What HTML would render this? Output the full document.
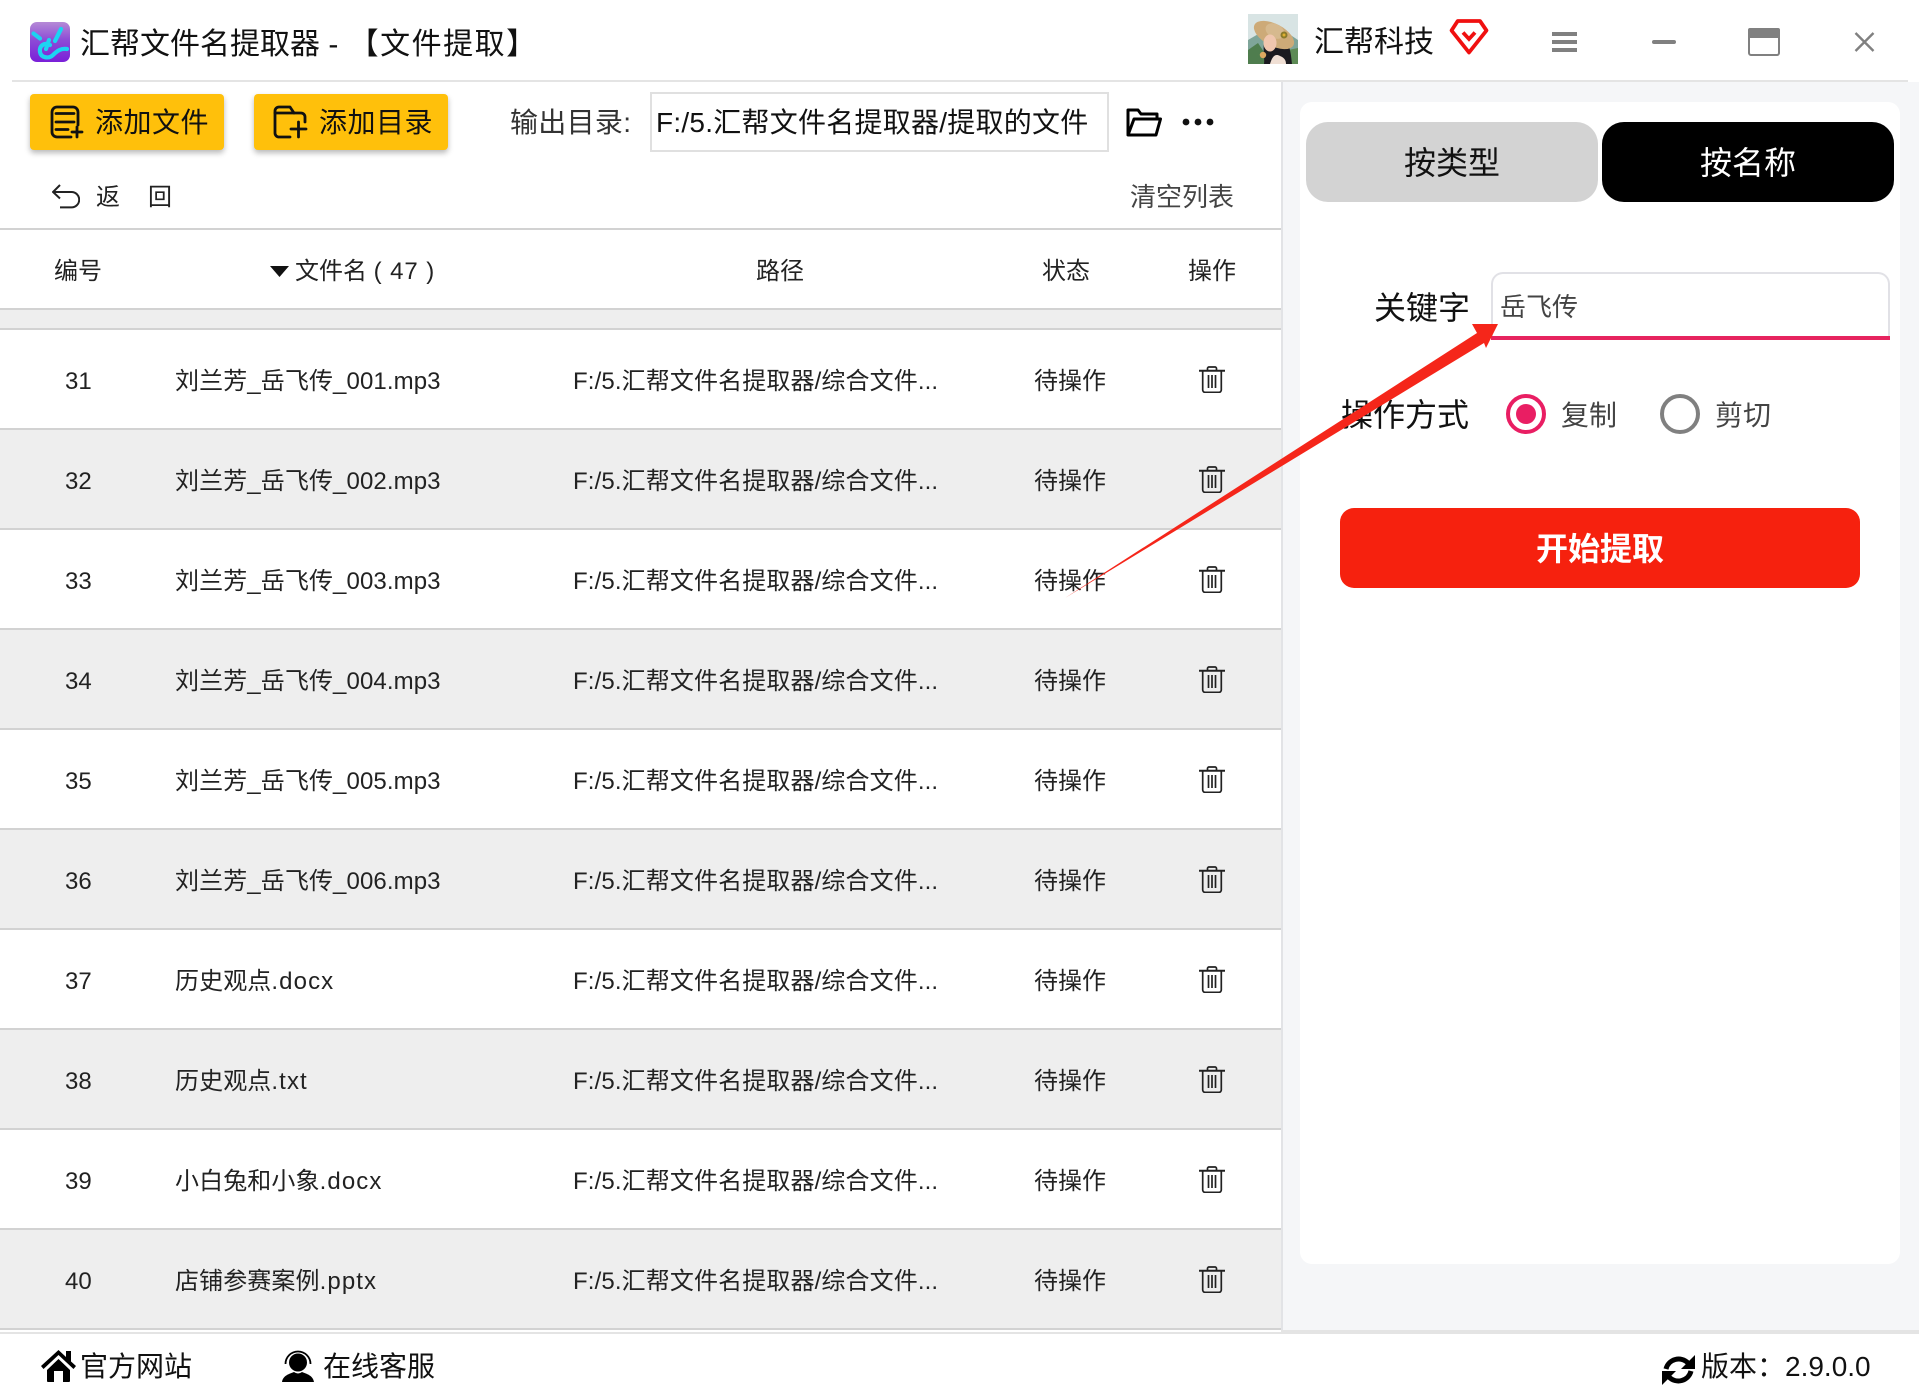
<!DOCTYPE html>
<html lang="zh-CN">
<head>
<meta charset="utf-8">
<title>汇帮文件名提取器</title>
<style>
html,body{margin:0;padding:0;background:#fff;}
body{position:relative;width:1919px;height:1399px;overflow:hidden;font-family:"Liberation Sans","Noto Sans CJK SC",sans-serif;color:#222;}
.a{position:absolute;}
.t{position:absolute;white-space:nowrap;line-height:40px;height:40px;}
.btn{position:absolute;top:94px;height:56px;width:194px;background:#ffc00b;border-radius:4px;box-shadow:0 3px 6px rgba(0,0,0,.28);}
.row{position:absolute;left:0;width:1281px;height:98px;font-size:24px;}
.row.g{background:#eeeeee;}
.row span{position:absolute;top:32px;line-height:40px;white-space:nowrap;}
.row .n{left:65px;}
.row .f{left:175px;letter-spacing:.1px;}
.row .f i{font-style:normal;letter-spacing:1.1px;}
.row .p{left:573px;letter-spacing:.12px;}
.row .s{left:1034px;}
.row svg{position:absolute;left:1199px;top:36px;}
.ln{position:absolute;left:0;width:1281px;height:2px;background:#d2d2d2;}
</style>
</head>
<body>
<svg width="0" height="0" style="position:absolute"><defs>
<symbol id="trash" viewBox="0 0 26 27"><g fill="none" stroke="#222" stroke-width="1.7"><path d="M8.5 4V2.5A1.5 1.5 0 0 1 10 1h6a1.5 1.5 0 0 1 1.5 1.5V4"/><path d="M0 4.7H26" stroke-width="2"/><path d="M3.7 5V24a2.3 2.3 0 0 0 2.3 2.3h14a2.3 2.3 0 0 0 2.3-2.3V5"/><path d="M9.5 9V22M13 9V22M16.5 9V22"/></g></symbol>
<linearGradient id="lg" x1="0" y1="0" x2="0" y2="1"><stop offset="0" stop-color="#b58ad6"/><stop offset=".45" stop-color="#8d4bd6"/><stop offset="1" stop-color="#7a1fd8"/></linearGradient>
</defs></svg>

<!-- title bar -->
<svg class="a" style="left:30px;top:22px" width="40" height="40" viewBox="0 0 40 40"><rect width="40" height="40" rx="7" fill="url(#lg)"/><g fill="none" stroke="#1cd3f2" stroke-width="4.2" stroke-linecap="round" stroke-linejoin="round"><path d="M3.5 11.5L10 16.5"/><path d="M31 7L25 19"/><path d="M20 23C14 20 9 24 10 30C11 36 19 37 23 33C27 29 31 26 37 27"/><path d="M19 18L16 27"/></g></svg>
<div class="t" style="left:80px;top:25px;font-size:30px;color:#111">汇帮文件名提取器 - <span style="letter-spacing:1.5px;margin-left:2px">【文件提取】</span></div>
<div class="a" style="left:12px;top:80px;width:1896px;height:2px;background:#e4e4e4"></div>

<svg class="a" style="left:1248px;top:14px" width="50" height="50" viewBox="0 0 50 50"><rect width="50" height="50" fill="#d8e4e4"/><path d="M0 26L12 19L24 26L38 18L50 26V50H0Z" fill="#7fa59a"/><path d="M0 36L10 29L24 50H0Z" fill="#4f7d4e"/><path d="M40 36L50 34V50H40Z" fill="#5d8a55"/><path d="M17 24C14 34 17 44 16 50H44C43 40 42 30 36 24Z" fill="#1b1a20"/><ellipse cx="26" cy="21" rx="22" ry="11" transform="rotate(28 26 21)" fill="#cdaa78"/><ellipse cx="27" cy="17" rx="10" ry="7" transform="rotate(28 27 17)" fill="#d6b98e"/><circle cx="36" cy="21" r="3.5" fill="#8a7a2a"/><circle cx="36" cy="21" r="1.5" fill="#e0b030"/><ellipse cx="22" cy="29" rx="6.5" ry="8.5" fill="#f0c6ae"/><path d="M22 50C24 43 27 39 32 42C37 44 38 47 38 50Z" fill="#f0dfd4"/><circle cx="15" cy="41" r="3.2" fill="#dca760"/></svg>
<div class="t" style="left:1314px;top:23px;font-size:30px;color:#111">汇帮科技</div>
<svg class="a" style="left:1445px;top:14px" width="48" height="48" viewBox="0 0 48 48"><path d="M12.7 7H35L41.5 16.5L24 38.5L6.5 16.5Z" fill="none" stroke="#f01010" stroke-width="3.8" stroke-linejoin="round"/><path d="M18 18.5L24 25L30 18.5" fill="none" stroke="#f01010" stroke-width="3.8"/></svg>
<svg class="a" style="left:1552px;top:32px" width="25" height="20"><path d="M0 2H25M0 10H25M0 18H25" stroke="#808080" stroke-width="4"/></svg>
<div class="a" style="left:1652px;top:40px;width:24px;height:4px;border-radius:2px;background:#808080"></div>
<svg class="a" style="left:1748px;top:28px" width="32" height="28"><rect x="1" y="1" width="30" height="26" rx="2" fill="none" stroke="#808080" stroke-width="2"/><rect x="0" y="0" width="32" height="10" rx="2" fill="#808080"/></svg>
<svg class="a" style="left:1854px;top:32px" width="21" height="20"><path d="M1.5 1L19.5 19M19.5 1L1.5 19" stroke="#808080" stroke-width="2.4"/></svg>

<!-- toolbar -->
<div class="btn" style="left:30px"></div>
<svg class="a" style="left:40px;top:100px" width="50" height="50" viewBox="0 0 50 50"><g fill="none" stroke="#111" stroke-width="2.8" stroke-linecap="round"><path d="M31 37H17a5 5 0 0 1-5-5V12a5 5 0 0 1 5-5h16a5 5 0 0 1 5 5V25"/><path d="M16 13.5H34M16 22H34M16 29.5H28"/><path d="M32 32H42M37 27V37"/></g></svg>
<div class="t" style="left:95px;top:103px;font-size:28px;letter-spacing:.5px;color:#111">添加文件</div>
<div class="btn" style="left:254px"></div>
<svg class="a" style="left:270px;top:100px" width="50" height="50" viewBox="0 0 50 50"><g fill="none" stroke="#111" stroke-width="2.8" stroke-linecap="round" stroke-linejoin="round"><path d="M20 37H9a4 4 0 0 1-4-4V11a4 4 0 0 1 4-4H20l4 6H31a4 4 0 0 1 4 4V22"/><path d="M5 13H24"/><path d="M21 29H36M28.5 22V37"/></g></svg>
<div class="t" style="left:319px;top:103px;font-size:28px;letter-spacing:.5px;color:#111">添加目录</div>
<div class="t" style="left:510px;top:103px;font-size:28px;letter-spacing:.3px;color:#333">输出目录:</div>
<div class="a" style="left:650px;top:92px;width:455px;height:56px;border:2px solid #e0e0e0"></div>
<div class="t" style="left:656px;top:103px;font-size:28px;letter-spacing:.25px;color:#111">F:/5.汇帮文件名提取器/提取的文件</div>
<svg class="a" style="left:1126px;top:107px" width="36" height="30" viewBox="0 0 36 30"><path d="M2 28V3H12L15 7H31V12M2 28H30L34.5 12H8L2 28Z" fill="none" stroke="#000" stroke-width="3" stroke-linejoin="round"/></svg>
<svg class="a" style="left:1182px;top:117px" width="32" height="10"><circle cx="4" cy="5" r="3.4" fill="#111"/><circle cx="16" cy="5" r="3.4" fill="#111"/><circle cx="28" cy="5" r="3.4" fill="#111"/></svg>

<svg class="a" style="left:52px;top:184px" width="28" height="25" viewBox="0 0 28 25"><path d="M8 1L1 8L8 14.5M1 8H19.5a7.7 7.7 0 0 1 0 15.4H8" fill="none" stroke="#222" stroke-width="2"/></svg>
<div class="t" style="left:96px;top:178px;font-size:24px">返</div>
<div class="t" style="left:148px;top:178px;font-size:24px">回</div>
<div class="t" style="left:1130px;top:177px;font-size:26px;color:#444">清空列表</div>

<div class="ln" style="top:228px"></div>
<div class="t" style="left:54px;top:252px;font-size:24px">编号</div>
<svg class="a" style="left:270px;top:266px" width="19" height="11"><path d="M0 0H19L9.5 11Z" fill="#111"/></svg>
<div class="t" style="left:295px;top:252px;font-size:24px">文件名 <span style="letter-spacing:.9px">( 47 )</span></div>
<div class="t" style="left:756px;top:252px;font-size:24px">路径</div>
<div class="t" style="left:1042px;top:252px;font-size:24px">状态</div>
<div class="t" style="left:1188px;top:252px;font-size:24px">操作</div>
<div class="a" style="left:0;top:310px;width:1281px;height:18px;background:#eeeeee"></div>
<div class="ln" style="top:308px"></div>
<div class="ln" style="top:328px"></div>

<!-- rows -->
<div class="row" style="top:330px"><span class="n">31</span><span class="f">刘兰芳_岳飞传_001.mp3</span><span class="p">F:/5.汇帮文件名提取器/综合文件...</span><span class="s">待操作</span><svg width="26" height="27"><use href="#trash"/></svg></div>
<div class="ln" style="top:428px"></div>
<div class="row g" style="top:430px"><span class="n">32</span><span class="f">刘兰芳_岳飞传_002.mp3</span><span class="p">F:/5.汇帮文件名提取器/综合文件...</span><span class="s">待操作</span><svg width="26" height="27"><use href="#trash"/></svg></div>
<div class="ln" style="top:528px"></div>
<div class="row" style="top:530px"><span class="n">33</span><span class="f">刘兰芳_岳飞传_003.mp3</span><span class="p">F:/5.汇帮文件名提取器/综合文件...</span><span class="s">待操作</span><svg width="26" height="27"><use href="#trash"/></svg></div>
<div class="ln" style="top:628px"></div>
<div class="row g" style="top:630px"><span class="n">34</span><span class="f">刘兰芳_岳飞传_004.mp3</span><span class="p">F:/5.汇帮文件名提取器/综合文件...</span><span class="s">待操作</span><svg width="26" height="27"><use href="#trash"/></svg></div>
<div class="ln" style="top:728px"></div>
<div class="row" style="top:730px"><span class="n">35</span><span class="f">刘兰芳_岳飞传_005.mp3</span><span class="p">F:/5.汇帮文件名提取器/综合文件...</span><span class="s">待操作</span><svg width="26" height="27"><use href="#trash"/></svg></div>
<div class="ln" style="top:828px"></div>
<div class="row g" style="top:830px"><span class="n">36</span><span class="f">刘兰芳_岳飞传_006.mp3</span><span class="p">F:/5.汇帮文件名提取器/综合文件...</span><span class="s">待操作</span><svg width="26" height="27"><use href="#trash"/></svg></div>
<div class="ln" style="top:928px"></div>
<div class="row" style="top:930px"><span class="n">37</span><span class="f">历史观点<i>.docx</i></span><span class="p">F:/5.汇帮文件名提取器/综合文件...</span><span class="s">待操作</span><svg width="26" height="27"><use href="#trash"/></svg></div>
<div class="ln" style="top:1028px"></div>
<div class="row g" style="top:1030px"><span class="n">38</span><span class="f">历史观点<i>.txt</i></span><span class="p">F:/5.汇帮文件名提取器/综合文件...</span><span class="s">待操作</span><svg width="26" height="27"><use href="#trash"/></svg></div>
<div class="ln" style="top:1128px"></div>
<div class="row" style="top:1130px"><span class="n">39</span><span class="f">小白兔和小象<i>.docx</i></span><span class="p">F:/5.汇帮文件名提取器/综合文件...</span><span class="s">待操作</span><svg width="26" height="27"><use href="#trash"/></svg></div>
<div class="ln" style="top:1228px"></div>
<div class="row g" style="top:1230px"><span class="n">40</span><span class="f">店铺参赛案例<i>.pptx</i></span><span class="p">F:/5.汇帮文件名提取器/综合文件...</span><span class="s">待操作</span><svg width="26" height="27"><use href="#trash"/></svg></div>
<div class="ln" style="top:1328px"></div>

<!-- right panel -->
<div class="a" style="left:1281px;top:82px;width:638px;height:1248px;background:#f5f6f8;border-left:2px solid #e2e3e6;box-sizing:border-box"></div>
<div class="a" style="left:1300px;top:102px;width:600px;height:1162px;background:#fff;border-radius:12px"></div>
<div class="a" style="left:1306px;top:122px;width:292px;height:80px;background:#d3d3d3;border-radius:22px;text-align:center;line-height:82px;font-size:32px;color:#111">按类型</div>
<div class="a" style="left:1602px;top:122px;width:292px;height:80px;background:#000;border-radius:22px;text-align:center;line-height:82px;font-size:32px;color:#fff">按名称</div>
<div class="t" style="left:1374px;top:288px;font-size:32px;color:#111">关键字</div>
<div class="a" style="left:1491px;top:272px;width:399px;height:66px;box-sizing:border-box;border:2px solid #e1e1e6;border-bottom:none;border-radius:12px 12px 0 0"></div>
<div class="a" style="left:1491px;top:336px;width:399px;height:4px;background:#e6245f"></div>
<div class="t" style="left:1500px;top:287px;font-size:26px;color:#444">岳飞传</div>
<div class="t" style="left:1341px;top:395px;font-size:32px;color:#111">操作方式</div>
<div class="a" style="left:1506px;top:394px;width:40px;height:40px;box-sizing:border-box;border:4px solid #e91e63;border-radius:50%"></div>
<div class="a" style="left:1516px;top:404px;width:20px;height:20px;background:#e91e63;border-radius:50%"></div>
<div class="t" style="left:1561px;top:396px;font-size:28px;color:#444">复制</div>
<div class="a" style="left:1660px;top:394px;width:40px;height:40px;box-sizing:border-box;border:4px solid #808080;border-radius:50%"></div>
<div class="t" style="left:1715px;top:396px;font-size:28px;color:#444">剪切</div>
<div class="a" style="left:1340px;top:508px;width:520px;height:80px;background:#f6210e;border-radius:14px;text-align:center;line-height:82px;font-size:32px;font-weight:bold;color:#fff">开始提取</div>

<!-- footer -->
<div class="a" style="left:0;top:1332px;width:1919px;height:2px;background:#e4e4e4"></div>
<div class="a" style="left:1281px;top:1330px;width:638px;height:2px;background:#e4e4e4"></div>
<svg class="a" style="left:41px;top:1350px" width="35" height="32" viewBox="0 0 35 32"><path d="M17.5 0L0 16l2.5 3L17.5 5L32.5 19L35 16L30 11.5V1H25V7Z" fill="#000"/><path d="M6 20L17.5 9L29 20V31a1 1 0 0 1-1 1H22V21H13V32H7a1 1 0 0 1-1-1Z" fill="#000"/></svg>
<div class="t" style="left:80px;top:1347px;font-size:28px;color:#111">官方网站</div>
<svg class="a" style="left:282px;top:1350px" width="32" height="32" viewBox="0 0 32 32"><circle cx="16" cy="12.5" r="9" fill="#000"/><path d="M3.5 14A12.5 12.5 0 0 1 28.5 14" fill="none" stroke="#000" stroke-width="1.8"/><path d="M0 32C1 25.5 7 24 12 22Q16 25 20 22C25 24 31 25.5 32 32Z" fill="#000"/></svg>
<div class="t" style="left:323px;top:1347px;font-size:28px;color:#111">在线客服</div>
<svg class="a" style="left:1662px;top:1355px" width="33" height="30" viewBox="0 0 33 30"><g fill="none" stroke="#000" stroke-width="5"><path d="M4 14A13 13 0 0 1 26 8"/><path d="M29 16A13 13 0 0 1 7 22"/></g><path d="M33 0V14H19Z" fill="#000"/><path d="M0 30V16H14Z" fill="#000"/></svg>
<div class="t" style="left:1701px;top:1347px;font-size:28px;color:#111">版本：2.9.0.0</div>

<!-- red arrow -->
<svg class="a" style="left:0;top:0;pointer-events:none" width="1919" height="1399"><polygon points="1065,598 1477,333 1472,324 1498,324 1486,348 1484,343" fill="#f5261a"/></svg>
</body>
</html>
